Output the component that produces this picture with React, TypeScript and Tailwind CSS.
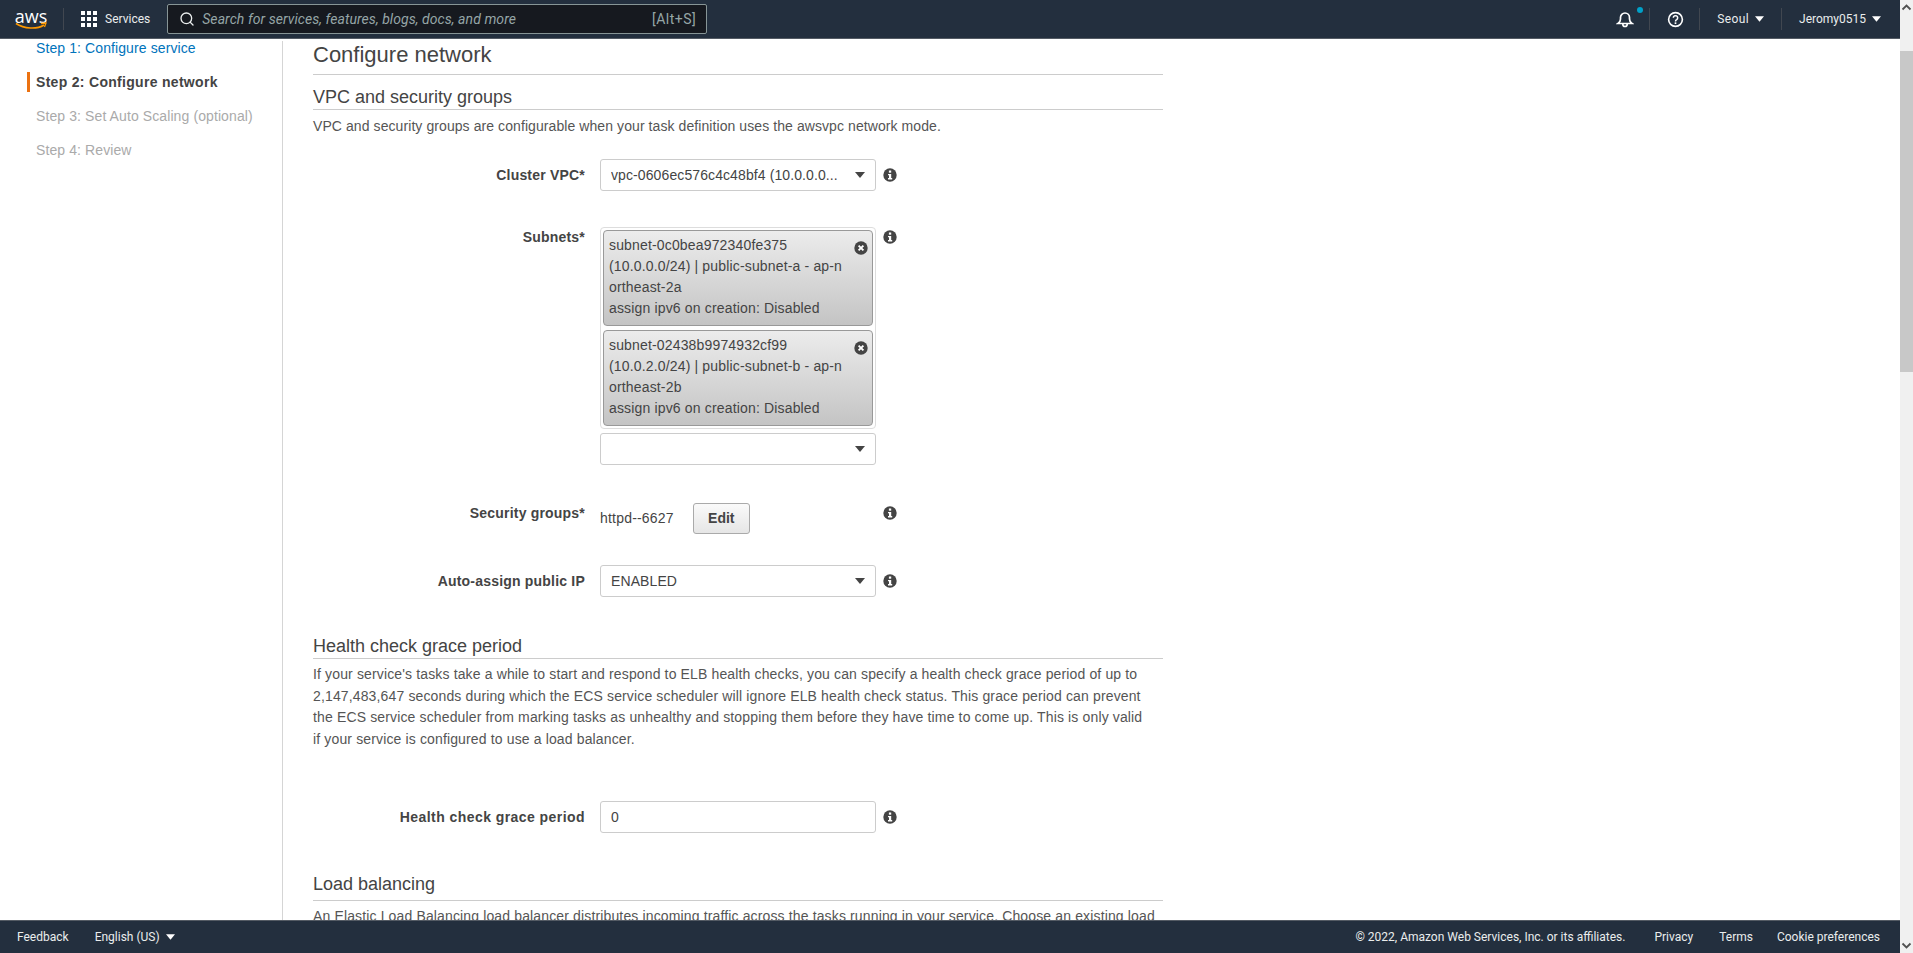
import { Search } from "lucide-react";

const sans = "font-['Liberation_Sans',Arial,sans-serif]";

function Caret({ className = "" }: { className?: string }) {
  return (
    <svg viewBox="0 0 10 6" className={`shrink-0 ${className}`} fill="currentColor">
      <path d="M0 0h10L5 6z" />
    </svg>
  );
}

function Info() {
  return (
    <svg width="14" height="14" viewBox="0 0 14 14" className="block shrink-0">
      <circle cx="7" cy="7" r="6.700" fill="#444" />
      <rect x="5.900" y="2.500" width="2.300" height="2.200" fill="#fff" />
      <path d="M5 5.900h3.200v4.200h1v1.400H5v-1.400h1V7.300H5z" fill="#fff" />
    </svg>
  );
}

function RemoveIcon() {
  return (
    <svg width="14" height="14" viewBox="0 0 14 14" className="block">
      <circle cx="7" cy="7" r="6.700" fill="#444" />
      <path d="M4.600 4.600l4.800 4.800M9.400 4.600L4.600 9.400" stroke="#fff" strokeWidth="1.900" />
    </svg>
  );
}

function Select({ value }: { value?: string }) {
  return (
    <div className="flex h-8 w-[276px] items-center justify-between rounded-[3px] border border-[#ccc] bg-white px-[10px]">
      <span className="truncate text-[14px] tracking-[0.1px] text-[#444]">{value}</span>
      <Caret className="ml-[15px] h-[6px] w-[10px] text-[#444]" />
    </div>
  );
}

function FormRow({
  label,
  children,
  className = "",
  labelClassName = "tracking-[0.2px]",
  center = false,
}: {
  label: string;
  children: React.ReactNode;
  className?: string;
  labelClassName?: string;
  center?: boolean;
}) {
  return (
    <div className={`flex ${center ? "items-center" : "items-start"} ${className}`}>
      <div className={`w-[272px] text-right text-[14px] font-bold text-[#444] ${labelClassName}`}>{label}</div>
      <div className="ml-[15px] w-[276px]">{children}</div>
      <div className={`ml-[7px] ${center ? "" : "pt-[3px]"}`}>
        <Info />
      </div>
    </div>
  );
}

function SubnetChip({ lines }: { lines: string[] }) {
  return (
    <div className="relative h-[96px] rounded-[4px] border border-[#999] bg-gradient-to-b from-[#ececec] to-[#c4c4c4] px-[5px] pt-[4px] text-[14px] leading-[21px] tracking-[0.16px] text-[#444]">
      {lines.map((l) => (
        <div key={l}>{l}</div>
      ))}
      <div className="absolute right-[4px] top-[10px]">
        <RemoveIcon />
      </div>
    </div>
  );
}

function SectionTitle({ title, className = "" }: { title: string; className?: string }) {
  return (
    <div className={`border-b border-[#ccc] text-[18px] leading-[24px] text-[#444] ${className}`}>{title}</div>
  );
}

function NavDivider({ className = "" }: { className?: string }) {
  return <div className={`h-[22px] w-px bg-[#414750] ${className}`} />;
}

export default function App() {
  return (
    <div className={`flex h-[953px] w-[1913px] overflow-hidden bg-white ${sans}`}>
      <div className="flex h-full w-[1900px] flex-col">
        {/* top nav */}
        <header className="flex h-[39px] shrink-0 items-center border-b border-[#545b64] bg-[#232f3e] text-[12px] text-[#eaeded] font-['Roboto',sans-serif]">
          <div className="ml-[15px] flex w-[32px] flex-col items-center">
            <span className="text-[18px] leading-[14px] text-white font-['Open_Sans',sans-serif]">aws</span>
            <svg width="32" height="8" viewBox="0 0 32 8" className="-mt-[1px]">
              <path d="M1 1.500c8 5.500 21 6 28 1.500" stroke="#f90" strokeWidth="1.600" fill="none" />
              <path d="M26 1.500l5-.5-1.500 4" stroke="#f90" strokeWidth="1.300" fill="none" />
            </svg>
          </div>
          <NavDivider className="ml-[16px]" />
          <svg width="16" height="16" viewBox="0 0 16 16" className="ml-[17px] fill-white">
            {[0, 6, 12].map((y) =>
              [0, 6, 12].map((x) => <rect key={`${x}-${y}`} x={x} y={y} width="4" height="4" />),
            )}
          </svg>
          <span className="ml-[8px]">Services</span>
          <div className="ml-[17px] flex h-[30px] w-[540px] items-center rounded-[2px] border border-[#879596] bg-[#16191f] pl-[11px] pr-[10px]">
            <Search size={16} strokeWidth={2} className="text-[#eaeded]" />
            <span className="ml-[7px] text-[14px] italic tracking-[0.07px] text-[#95a5a6]">Search for services, features, blogs, docs, and more</span>
            <span className="ml-auto text-[14px] tracking-[0.5px] text-[#95a5a6]">[Alt+S]</span>
          </div>
          <div className="ml-auto flex items-center">
            <div className="relative">
              <svg width="18" height="18" viewBox="0 0 18 18" className="block" fill="none" stroke="#fff" strokeWidth="1.700">
                <path d="M2 13.500c1.600-1 2.500-2 2.500-4.500V7.500a4.500 4.500 0 0 1 9 0V9c0 2.500.9 3.500 2.500 4.500z" />
                <path d="M6.800 14c0 1.500 1 2.500 2.200 2.500s2.200-1 2.200-2.500" />
              </svg>
              <span className="absolute -right-[9px] -top-[3px] h-[6px] w-[6px] rounded-full bg-[#00a1c9]" />
            </div>
            <NavDivider className="ml-[15px]" />
            <svg width="17" height="17" viewBox="0 0 18 18" className="ml-[17px]" fill="none">
              <circle cx="9" cy="9" r="7.300" stroke="#fff" strokeWidth="1.700" />
              <path d="M6.700 7.200a2.300 2.300 0 1 1 3.500 2c-.9.500-1.200 1-1.200 1.800" stroke="#fff" strokeWidth="1.600" />
              <rect x="8.100" y="12" width="1.800" height="1.800" fill="#fff" />
            </svg>
            <NavDivider className="ml-[15px]" />
            <span className="ml-[17px] tracking-[0.4px]">Seoul</span>
            <Caret className="ml-[6px] h-[6px] w-[9px] text-white" />
            <NavDivider className="ml-[17px]" />
            <span className="ml-[17px]">Jeromy0515</span>
            <Caret className="ml-[6px] mr-[19px] h-[6px] w-[9px] text-white" />
          </div>
        </header>

        <div className="flex min-h-0 flex-1 overflow-hidden">
          {/* wizard steps */}
          <aside className="mt-[2px] w-[283px] shrink-0 border-r border-[#d5d5d5] text-[14px] tracking-[0.1px]">
            <div className="pl-[36px] leading-[14px] text-[#0073bb]">Step 1: Configure service</div>
            <div className="relative mt-[20px] pl-[36px] font-bold leading-[14px] tracking-[0.3px] text-[#444]">
              Step 2: Configure network
              <span className="absolute left-[27px] -top-[3px] h-[20px] w-[3px] bg-[#ec7211]" />
            </div>
            <div className="mt-[20px] pl-[36px] leading-[14px] text-[#aaa]">Step 3: Set Auto Scaling (optional)</div>
            <div className="mt-[20px] pl-[36px] leading-[14px] text-[#aaa]">Step 4: Review</div>
          </aside>

          {/* form */}
          <main className="w-[880px] overflow-hidden pl-[30px] text-[#444]">
            <div className="w-[850px]">
              <div className="border-b border-[#ccc] pb-[6px] pt-[3px] text-[22px] leading-[26px]">Configure network</div>
              <SectionTitle title="VPC and security groups" className="mt-[10px]" />
              <p className="mt-[6px] text-[14px] leading-[21px] tracking-[0.08px] text-[#555]">
                VPC and security groups are configurable when your task definition uses the awsvpc network mode.
              </p>

              <FormRow label="Cluster VPC*" center className="mt-[22px]">
                <Select value="vpc-0606ec576c4c48bf4 (10.0.0.0..." />
              </FormRow>

              <FormRow label="Subnets*" className="mt-[36px]">
                <div className="flex flex-col gap-[4px] rounded-[4px] border border-[#ddd] p-[2px]">
                  <SubnetChip
                    lines={[
                      "subnet-0c0bea972340fe375",
                      "(10.0.0.0/24) | public-subnet-a - ap-n",
                      "ortheast-2a",
                      "assign ipv6 on creation: Disabled",
                    ]}
                  />
                  <SubnetChip
                    lines={[
                      "subnet-02438b9974932cf99",
                      "(10.0.2.0/24) | public-subnet-b - ap-n",
                      "ortheast-2b",
                      "assign ipv6 on creation: Disabled",
                    ]}
                  />
                </div>
                <div className="mt-[4px]">
                  <Select />
                </div>
              </FormRow>

              <FormRow label="Security groups*" className="mt-[38px]">
                <div className="flex items-center">
                  <span className="text-[14px] tracking-[0.2px]">httpd--6627</span>
                  <button className="ml-[19px] h-[31px] w-[57px] rounded-[3px] border border-[#aaa] bg-gradient-to-b from-[#fafafa] to-[#e6e6e6] text-[14px] font-bold text-[#444]">
                    Edit
                  </button>
                </div>
              </FormRow>

              <FormRow label="Auto-assign public IP" center className="mt-[31px]">
                <Select value="ENABLED" />
              </FormRow>

              <SectionTitle title="Health check grace period" className="mt-[37px]" />
              <p className="mt-[5px] w-[840px] text-[14px] leading-[21.500px] tracking-[0.14px] text-[#555]">
                If your service's tasks take a while to start and respond to ELB health checks, you can specify a health check grace period of up to 2,147,483,647 seconds during which the ECS service scheduler will ignore ELB health check status. This grace period can prevent the ECS service scheduler from marking tasks as unhealthy and stopping them before they have time to come up. This is only valid if your service is configured to use a load balancer.
              </p>

              <FormRow label="Health check grace period" center labelClassName="tracking-[0.44px]" className="mt-[51px]">
                <div className="flex h-8 w-[276px] items-center rounded-[3px] border border-[#ccc] bg-white pl-[10px] text-[14px]">0</div>
              </FormRow>

              <SectionTitle title="Load balancing" className="mt-[39px] pb-[4px]" />
              <p className="mt-[5px] whitespace-nowrap text-[14px] leading-[21px] tracking-[0.14px] text-[#555]">
                An Elastic Load Balancing load balancer distributes incoming traffic across the tasks running in your service. Choose an existing load
              </p>
            </div>
          </main>
        </div>

        {/* bottom bar */}
        <footer className="flex h-[33px] shrink-0 items-center border-t border-[#545b64] bg-[#232f3e] pl-[17px] pr-[20px] text-[12px] text-[#eaeded] font-['Roboto',sans-serif]">
          <span>Feedback</span>
          <span className="ml-[26px]">English (US)</span>
          <Caret className="ml-[6px] h-[6px] w-[9px] text-white" />
          <span className="ml-auto">© 2022, Amazon Web Services, Inc. or its affiliates.</span>
          <span className="ml-[29px]">Privacy</span>
          <span className="ml-[26px]">Terms</span>
          <span className="ml-[24px]">Cookie preferences</span>
        </footer>
      </div>

      {/* page scrollbar */}
      <div className="flex h-full w-[13px] flex-col bg-[#f0f0f0]">
        <svg width="13" height="16" viewBox="0 0 13 16" className="shrink-0">
          <path d="M2.500 9.500l4-4 4 4" stroke="#505050" strokeWidth="1.800" fill="none" />
        </svg>
        <div className="mt-[35px] h-[321px] bg-[#c8c8c8]" />
        <svg width="13" height="16" viewBox="0 0 13 16" className="mt-auto shrink-0">
          <path d="M2.500 6.500l4 4 4-4" stroke="#505050" strokeWidth="1.800" fill="none" />
        </svg>
      </div>
    </div>
  );
}
